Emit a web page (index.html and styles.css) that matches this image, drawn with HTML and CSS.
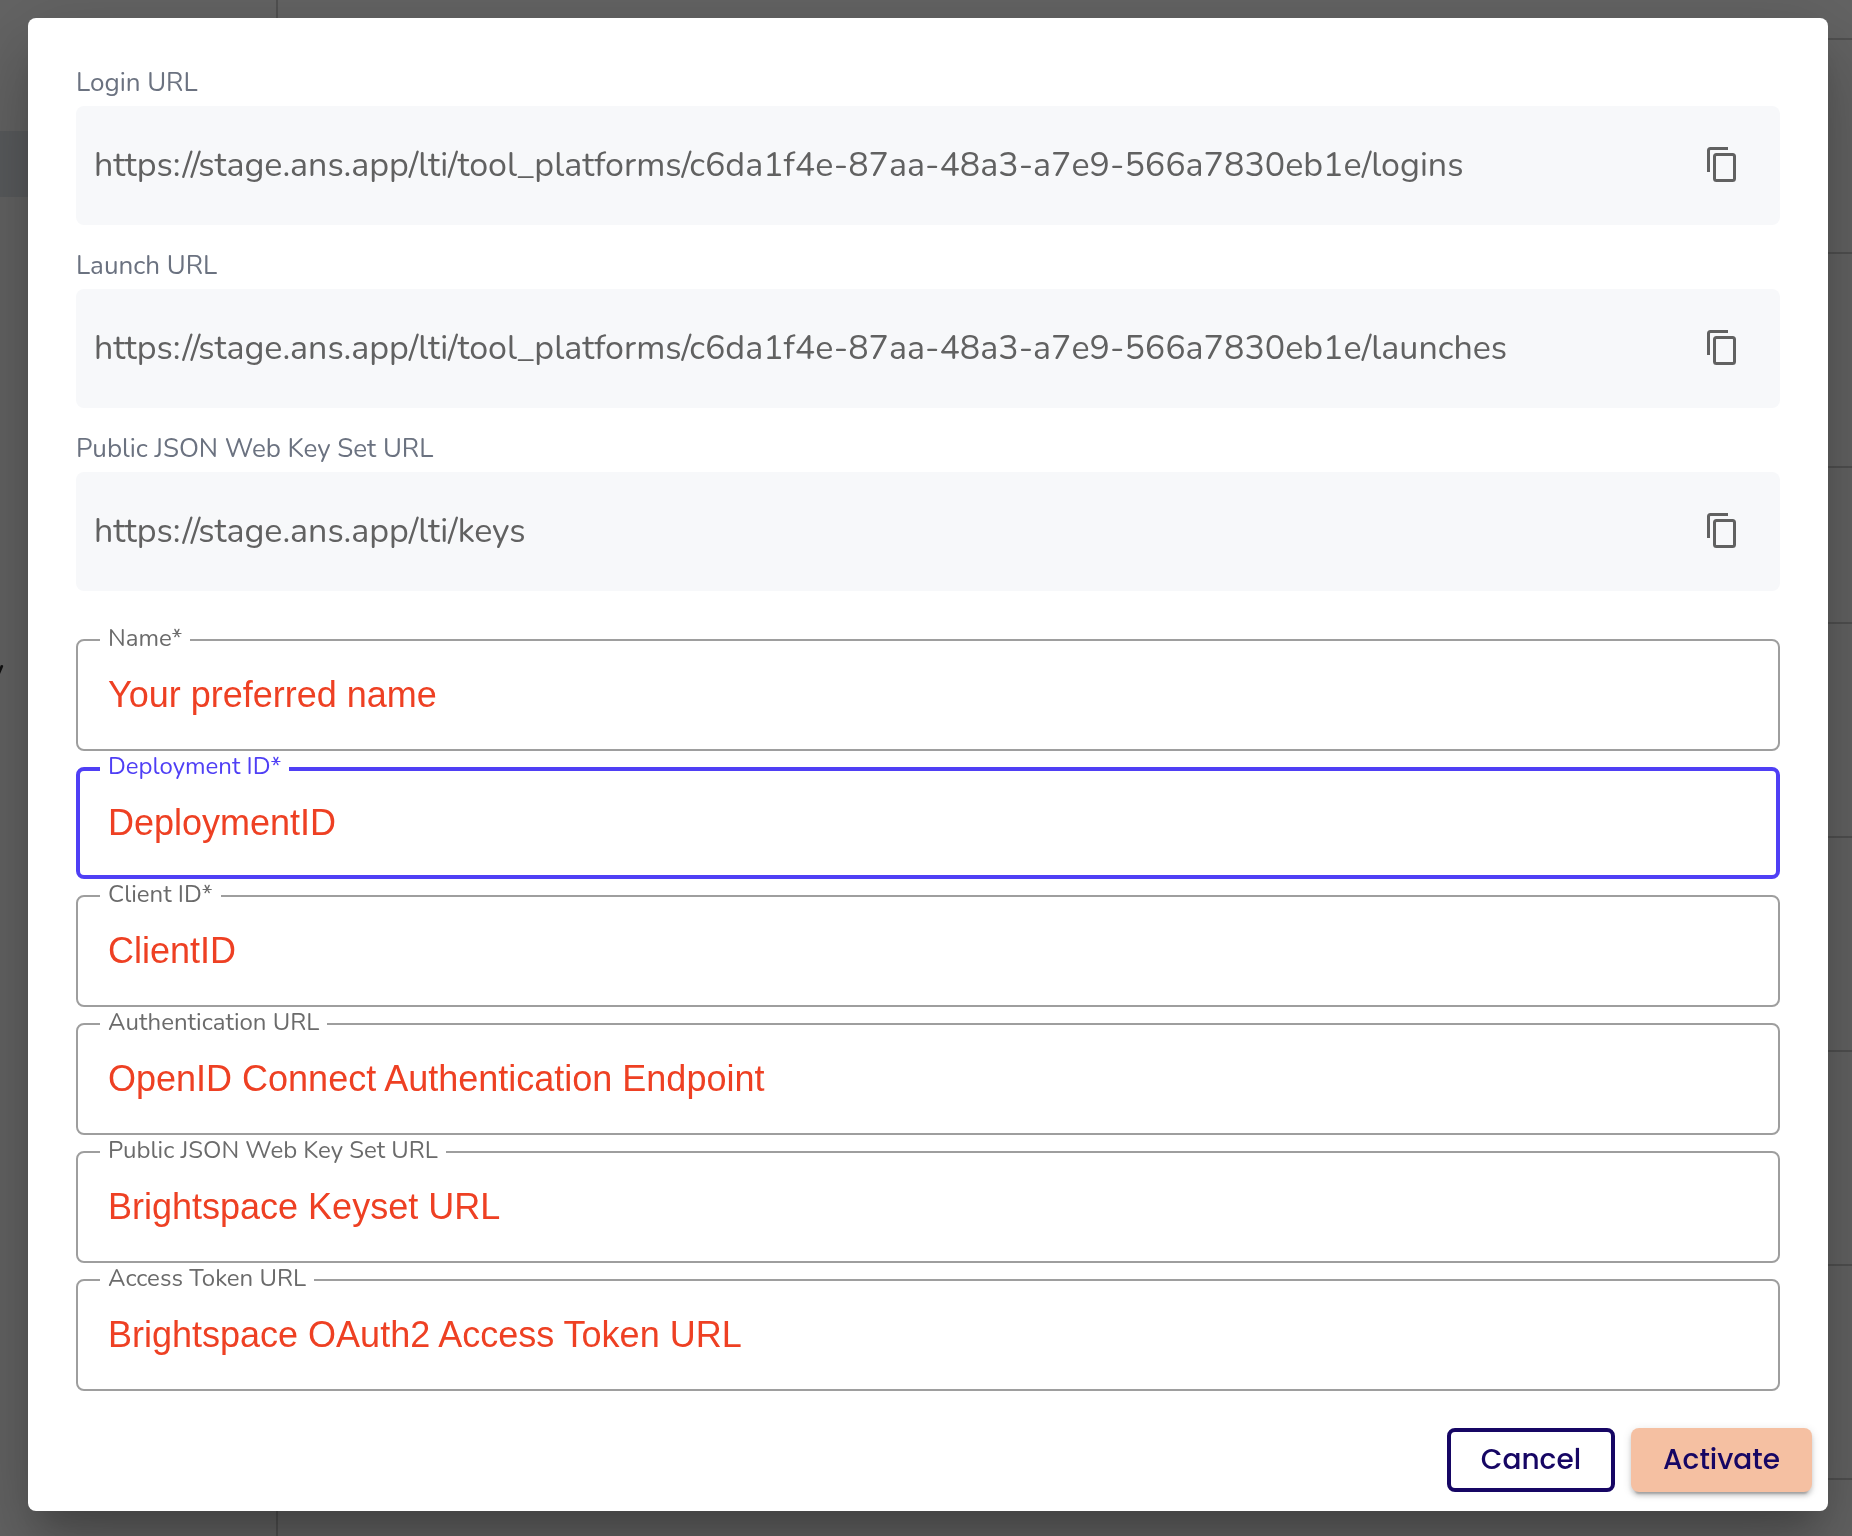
FILE: index.html
```html
<!DOCTYPE html>
<html lang="en">
<head>
  <meta charset="UTF-8">
  <meta name="viewport" content="width=device-width, initial-scale=1.0">
  <title>LTI Tool Platform</title>
  <link rel="stylesheet" href="styles.css">
</head>
<body>
  <!-- Page behind the dialog -->
  <div class="page" aria-hidden="true">
    <div class="sidebar">
      <div class="sidebar-active"></div>
      <div class="sidebar-item">y</div>
    </div>
    <div class="content">
      <div class="row row-header"></div>
      <div class="row"></div>
      <div class="row"></div>
      <div class="row row-short"></div>
      <div class="row"></div>
      <div class="row"></div>
      <div class="row"></div>
      <div class="row"></div>
    </div>
  </div>

  <div class="overlay">
    <form class="dialog" role="dialog" aria-modal="true">
      <div class="dialog-body">
        <div class="copy-group">
          <div class="copy-label">Login URL</div>
          <div class="copy-box">
            <span class="copy-url">https://stage.ans.app/lti/tool_platforms/c6da1f4e-87aa-48a3-a7e9-566a7830eb1e/logins</span>
            <button type="button" class="copy-btn" aria-label="Copy">
              <svg viewBox="0 2 36 36"><path d="M4.500 27V5.500a2 2 0 0 1 2-2H24M12.500 9.500h16a2 2 0 0 1 2 2v22a2 2 0 0 1-2 2h-16a2 2 0 0 1-2-2v-22a2 2 0 0 1 2-2z"/></svg>
            </button>
          </div>
        </div>

        <div class="copy-group">
          <div class="copy-label">Launch URL</div>
          <div class="copy-box">
            <span class="copy-url">https://stage.ans.app/lti/tool_platforms/c6da1f4e-87aa-48a3-a7e9-566a7830eb1e/launches</span>
            <button type="button" class="copy-btn" aria-label="Copy">
              <svg viewBox="0 2 36 36"><path d="M4.500 27V5.500a2 2 0 0 1 2-2H24M12.500 9.500h16a2 2 0 0 1 2 2v22a2 2 0 0 1-2 2h-16a2 2 0 0 1-2-2v-22a2 2 0 0 1 2-2z"/></svg>
            </button>
          </div>
        </div>

        <div class="copy-group">
          <div class="copy-label">Public JSON Web Key Set URL</div>
          <div class="copy-box">
            <span class="copy-url">https://stage.ans.app/lti/keys</span>
            <button type="button" class="copy-btn" aria-label="Copy">
              <svg viewBox="0 2 36 36"><path d="M4.500 27V5.500a2 2 0 0 1 2-2H24M12.500 9.500h16a2 2 0 0 1 2 2v22a2 2 0 0 1-2 2h-16a2 2 0 0 1-2-2v-22a2 2 0 0 1 2-2z"/></svg>
            </button>
          </div>
        </div>

        <div class="fields">
          <div class="field">
            <label for="name">Name*</label>
            <input type="text" id="name" value="Your preferred name">
          </div>
          <div class="field field-active">
            <label for="deployment">Deployment ID*</label>
            <input type="text" id="deployment" value="DeploymentID">
          </div>
          <div class="field">
            <label for="client">Client ID*</label>
            <input type="text" id="client" value="ClientID">
          </div>
          <div class="field">
            <label for="auth">Authentication URL</label>
            <input type="text" id="auth" value="OpenID Connect Authentication Endpoint">
          </div>
          <div class="field">
            <label for="keyset">Public JSON Web Key Set URL</label>
            <input type="text" id="keyset" value="Brightspace Keyset URL">
          </div>
          <div class="field">
            <label for="token">Access Token URL</label>
            <input type="text" id="token" value="Brightspace OAuth2 Access Token URL">
          </div>
        </div>
      </div>

      <div class="dialog-actions">
        <button type="button" class="btn btn-outline">Cancel</button>
        <button type="submit" class="btn btn-primary">Activate</button>
      </div>
    </form>
  </div>
</body>
</html>
```
FILE: styles.css
```css
* {
  box-sizing: border-box;
}

body {
  margin: 0;
  min-height: 100vh;
  background-color: #646464;
  font-family: Nunito, "Open Sans", sans-serif;
  color: #616161;
}

/* Page behind the dialog */
.page {
  position: fixed;
  inset: 0;
  display: flex;
  overflow: hidden;
}

.sidebar {
  width: 278px;
  border-right: 2px solid #515151;
  padding-top: 131px;
}

.sidebar-active {
  height: 66px;
  background-color: #5a5c5e;
}

.sidebar-item {
  margin: 456px 0 0 -9px;
  font-size: 24px;
  line-height: 32px;
  font-weight: bold;
  color: #111;
}

.content {
  flex: 1;
}

.row {
  height: 214px;
  border-bottom: 2px solid #515151;
}

.row-header {
  height: 40px;
}

.row-short {
  height: 156px;
}

/* Dialog */
.overlay {
  position: relative;
  padding: 18px 24px 25px 28px;
}

.dialog {
  background-color: #fff;
  border-radius: 8px;
  box-shadow: 0 22px 30px -14px rgba(0, 0, 0, 0.2),
    0 48px 76px 6px rgba(0, 0, 0, 0.14),
    0 18px 92px 16px rgba(0, 0, 0, 0.12);
}

.dialog-body {
  padding: 48px 48px 32px;
}

/* Copyable URLs */
.copy-label {
  height: 40px;
  font-size: 26px;
  line-height: 34px;
  color: #6b7280;
}

.copy-box {
  display: flex;
  align-items: center;
  justify-content: space-between;
  height: 119px;
  margin-bottom: 24px;
  padding: 0 40px 2px 18px;
  background-color: #f7f8fa;
  border-radius: 8px;
}

.copy-url {
  font-size: 34px;
  line-height: 48px;
}

.copy-btn {
  display: flex;
  padding: 0;
  border: none;
  background: none;
  cursor: pointer;
}

.copy-btn svg {
  width: 36px;
  height: 36px;
  fill: none;
  stroke: #616161;
  stroke-width: 3;
}

/* Outlined text fields */
.fields {
  display: flex;
  flex-direction: column;
  gap: 16px;
  padding-top: 24px;
}

.field {
  position: relative;
}

.field label {
  position: absolute;
  top: -16px;
  left: 24px;
  padding: 0 8px;
  background-color: #fff;
  font-size: 24px;
  line-height: 30px;
  color: #6b6b6b;
}

.field input {
  display: block;
  width: 100%;
  height: 112px;
  padding: 0 30px;
  border: 2px solid #9e9e9e;
  border-radius: 8px;
  background: none;
  font-family: Helvetica, "Liberation Sans", sans-serif;
  font-size: 36px;
  color: #ee4023;
  outline: none;
}

.field-active label {
  color: #4f3ff5;
}

.field-active input {
  padding: 0 28px;
  border: 4px solid #4f3ff5;
}

/* Buttons */
.dialog-actions {
  display: flex;
  justify-content: flex-end;
  gap: 16px;
  padding: 5px 16px 19px;
}

.btn {
  height: 64px;
  padding: 0 32px;
  border: none;
  border-radius: 8px;
  font-family: Poppins, Inter, sans-serif;
  font-size: 28px;
  font-weight: 500;
  color: #160664;
  cursor: pointer;
}

.btn-outline {
  padding: 0 30px;
  background-color: #fff;
  border: 4px solid #160664;
}

.btn-primary {
  background-color: #f5c0a2;
  box-shadow: 0 6px 2px -4px rgba(0, 0, 0, 0.2),
    0 4px 4px 0 rgba(0, 0, 0, 0.14),
    0 2px 10px 0 rgba(0, 0, 0, 0.12);
}
```
